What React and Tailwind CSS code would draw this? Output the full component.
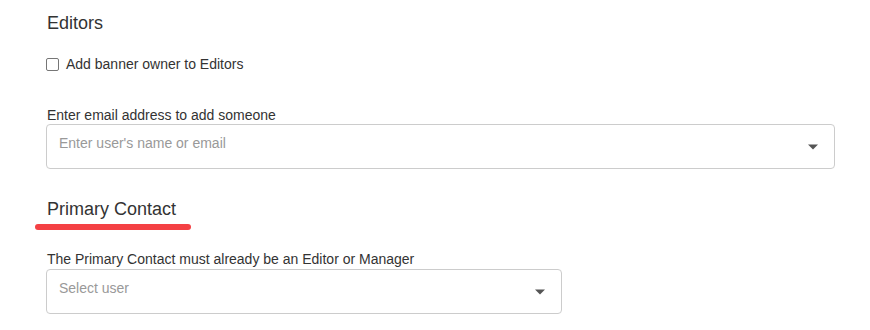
export default function App() {
  const arrow = (
    <svg width="10" height="6" viewBox="0 0 10 5" className="text-[#555]">
      <path d="M0 0 L10 0 L5 5 Z" fill="currentColor" />
    </svg>
  );

  return (
    <div className="w-[870px] h-[330px] overflow-hidden bg-white font-['Liberation_Sans',Arial,sans-serif] text-[#333]">
      <div className="pl-[46px] pr-[35px] pt-[12px]">
        <h2 className="text-[18px] leading-[22px] pl-px">Editors</h2>

        <label className="mt-[22px] flex items-center gap-[7px] text-[14px] leading-[16px]">
          <span className="w-[13px] h-[13px] rounded-[2px] border border-[#767676] bg-white" />
          <span>Add banner owner to Editors</span>
        </label>

        <div className="mt-[35px] text-[14px] leading-[16px] pl-px">Enter email address to add someone</div>
        <div className="mt-[1px] h-[45px] flex items-center justify-between rounded-[4px] border border-[#ccc] pl-[12px] pr-[16px]">
          <span className="text-[14px] text-[#999] -mt-[6px]">Enter user's name or email</span>
          {arrow}
        </div>

        <div className="mt-[29px] relative w-fit">
          <h2 className="text-[18px] leading-[22px] pl-px">Primary Contact</h2>
          <div className="absolute left-[-11px] top-[26px] w-[156px] h-[6px] rounded-full bg-[#f44144]" />
        </div>

        <div className="mt-[31px] text-[14px] leading-[16px] pl-px">The Primary Contact must already be an Editor or Manager</div>
        <div className="mt-[2px] w-[516px] h-[45px] flex items-center justify-between rounded-[4px] border border-[#ccc] pl-[12px] pr-[16px]">
          <span className="text-[14px] text-[#999] -mt-[6px]">Select user</span>
          {arrow}
        </div>
      </div>
    </div>
  );
}
